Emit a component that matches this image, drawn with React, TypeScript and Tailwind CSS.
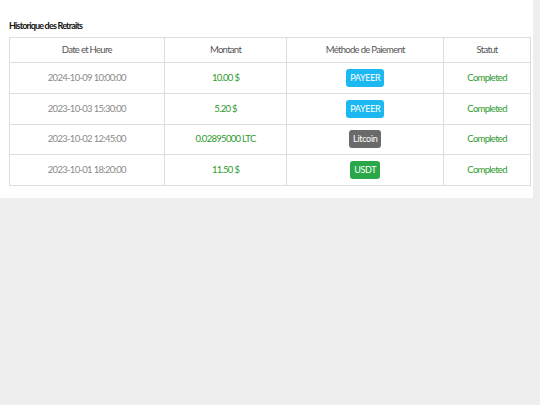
const rows = [
  { date: "2024-10-09 10:00:00", amount: "10.00 $", method: "PAYEER", badge: "bg-[#1cb8f2]", status: "Completed" },
  { date: "2023-10-03 15:30:00", amount: "5.20 $", method: "PAYEER", badge: "bg-[#1cb8f2]", status: "Completed" },
  { date: "2023-10-02 12:45:00", amount: "0.02895000 LTC", method: "Litcoin", badge: "bg-[#6a6a6a]", status: "Completed" },
  { date: "2023-10-01 18:20:00", amount: "11.50 $", method: "USDT", badge: "bg-[#2aa748]", status: "Completed" },
];

export default function App() {
  return (
    <div className="min-h-screen bg-[#eeeeee] font-['Lato',sans-serif]">
      <div className="w-[533px] bg-white pl-[9px] pr-[2px] pt-[20px] pb-[12px]">
        <h2 className="text-[9px] leading-[12px] font-bold text-[#111] tracking-[-0.8px] mb-[5px]">
          Historique des Retraits
        </h2>
        <table className="w-[522px] border-collapse text-center text-[9.5px] tracking-[-0.7px]">
          <thead>
            <tr className="h-[25px] text-[#555]">
              <th className="w-[155px] border border-[#dddddd] font-normal">Date et Heure</th>
              <th className="w-[123px] border border-[#dddddd] font-normal">Montant</th>
              <th className="w-[157px] border border-[#dddddd] font-normal">Méthode de Paiement</th>
              <th className="w-[87px] border border-[#dddddd] font-normal">Statut</th>
            </tr>
          </thead>
          <tbody>
            {rows.map((r) => (
              <tr key={r.date} className="h-[30.75px]">
                <td className="border border-[#dddddd] text-[#8a8a8a]">{r.date}</td>
                <td className="border border-[#dddddd] text-[#2e9a2e]">{r.amount}</td>
                <td className="border border-[#dddddd]">
                  <span className={`inline-block rounded-[3px] px-[4px] py-[3px] text-[9px] leading-[12px] tracking-[-0.3px] text-white ${r.badge}`}>
                    {r.method}
                  </span>
                </td>
                <td className="border border-[#dddddd] text-[#2e9a2e]">{r.status}</td>
              </tr>
            ))}
          </tbody>
        </table>
      </div>
    </div>
  );
}
